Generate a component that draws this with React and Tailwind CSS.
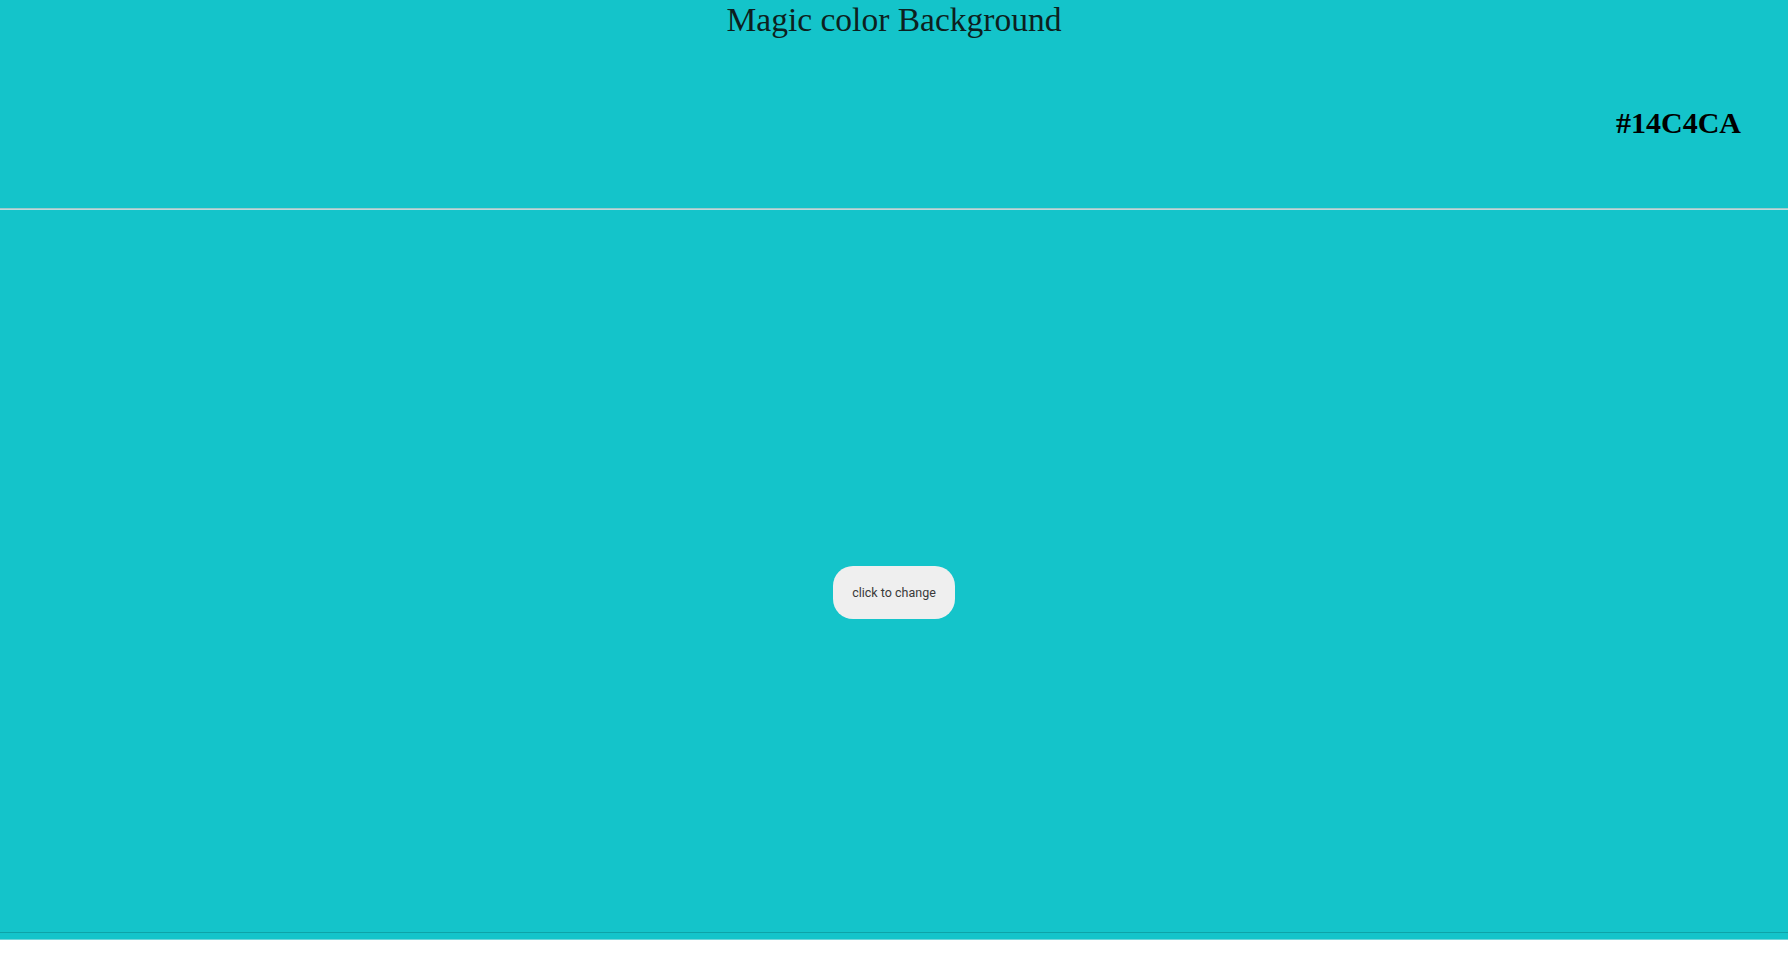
import { useState } from 'react';

export default function App() {
  const [color] = useState('#14C4CA');

  return (
    <div className="bg-white">
      <div className="flex h-[940px] flex-col bg-[#14C4CA] font-['Liberation_Serif',serif] text-black">
        {/* Header */}
        <header className="h-[208px] pt-px">
          <h1 className="m-0 text-center text-[33.5px] font-normal leading-[38px] text-[#0d1f20]">
            Magic color Background
          </h1>
          <div className="mt-[67px] flex justify-end pr-[47px]">
            <h2 className="m-0 text-[30px] font-bold leading-[34px]">{color}</h2>
          </div>
        </header>

        <div className="h-[2px] border-t border-[#9fc9cb] bg-[#b9dcdd]" />

        {/* Main */}
        <main className="flex flex-1 justify-center border-b border-[#0ea3a8] pt-[356px]">
          <button
            type="button"
            className="h-[53px] w-[122px] rounded-[20px] bg-[#efefef] pt-[2px] font-['Roboto',sans-serif] text-[12.5px] text-[#3a3a3a]"
          >
            click to change
          </button>
        </main>

        <div className="h-[7px] border-b border-[#6fd6da]" />
      </div>
    </div>
  );
}
